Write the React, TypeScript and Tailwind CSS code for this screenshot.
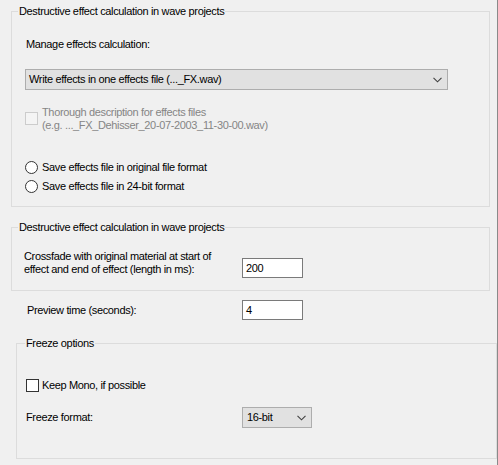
import React from "react";

function Chevron({ className = "" }: { className?: string }) {
  return (
    <svg width="9" height="6" viewBox="0 0 9 6" className={className}>
      <path d="M0.5 0.8 L4.5 4.8 L8.5 0.8" fill="none" stroke="#404040" strokeWidth="1.1" />
    </svg>
  );
}

function Radio({ label }: { label: string }) {
  return (
    <div className="flex items-center h-[13px] ml-[13px]">
      <span className="w-[13px] h-[13px] rounded-full border border-[#333333] bg-white shrink-0" />
      <span className="ml-[4px] leading-[13px] whitespace-nowrap">{label}</span>
    </div>
  );
}

export default function App() {
  return (
    <div className="w-[498px] h-[465px] bg-[#f0f0f0] border-r border-[#8a8a8a] overflow-hidden text-[11px] tracking-[-0.35px] text-black font-['Liberation_Sans',Arial,sans-serif] flex flex-col pt-[4px]">
      {/* Group 1 */}
      <fieldset className="ml-[11px] w-[479px] h-[203px] border border-[#dcdcdc] flex flex-col">
        <legend className="ml-[6px] px-[1px] leading-[14px] whitespace-nowrap">
          Destructive effect calculation in wave projects
        </legend>
        <div className="mt-[19px] ml-[14px] leading-[14px]">Manage effects calculation:</div>
        <div className="mt-[18px] ml-[13px] w-[423px] h-[21px] bg-[#e1e1e1] border border-[#adadad] flex items-center justify-between pl-[3px] pr-[5px]">
          <span className="whitespace-nowrap">Write effects in one effects file (..._FX.wav)</span>
          <Chevron />
        </div>
        <div className="mt-[16px] ml-[13px] flex items-start">
          <span className="mt-[6px] w-[13px] h-[13px] border border-[#cccccc] bg-[#f4f4f4] shrink-0" />
          <div className="ml-[4px] leading-[13px] text-[#858585] whitespace-nowrap">
            <div>Thorough description for effects files</div>
            <div>(e.g. ..._FX_Dehisser_20-07-2003_11-30-00.wav)</div>
          </div>
        </div>
        <div className="mt-[29px]">
          <Radio label="Save effects file in original file format" />
        </div>
        <div className="mt-[6px]">
          <Radio label="Save effects file in 24-bit format" />
        </div>
      </fieldset>

      {/* Group 2 */}
      <fieldset className="mt-[13px] ml-[11px] w-[479px] h-[71px] border border-[#dcdcdc] flex flex-col">
        <legend className="ml-[6px] px-[1px] leading-[14px] whitespace-nowrap">
          Destructive effect calculation in wave projects
        </legend>
        <div className="mt-[16px] flex items-start">
          <div className="ml-[12px] w-[218px] leading-[13px]">
            <div>Crossfade with original material at start of</div>
            <div>effect and end of effect (length in ms):</div>
          </div>
          <div className="mt-[8px] w-[61px] h-[20px] bg-white border border-[#7a7a7a] flex items-center pl-[3px] leading-[13px]">
            200
          </div>
        </div>
      </fieldset>

      {/* Preview time */}
      <div className="mt-[9px] flex items-center">
        <div className="ml-[27px] w-[215px] leading-[13px]">Preview time (seconds):</div>
        <div className="w-[61px] h-[20px] bg-white border border-[#7a7a7a] flex items-center pl-[3px] leading-[13px]">
          4
        </div>
      </div>

      {/* Group 3 */}
      <fieldset className="mt-[16px] ml-[16px] w-[481px] h-[123px] border border-[#dcdcdc] flex flex-col">
        <legend className="ml-[8px] px-[1px] leading-[14px] whitespace-nowrap">Freeze options</legend>
        <div className="mt-[29px] ml-[9px] flex items-center h-[13px]">
          <span className="w-[13px] h-[13px] border border-[#333333] bg-white shrink-0" />
          <span className="ml-[3px] leading-[13px] whitespace-nowrap">Keep Mono, if possible</span>
        </div>
        <div className="mt-[15px] flex items-center">
          <div className="ml-[9px] w-[216px] leading-[13px]">Freeze format:</div>
          <div className="w-[70px] h-[21px] bg-[#e1e1e1] border border-[#adadad] flex items-center justify-between pl-[4px] pr-[5px]">
            <span>16-bit</span>
            <Chevron />
          </div>
        </div>
      </fieldset>
    </div>
  );
}
